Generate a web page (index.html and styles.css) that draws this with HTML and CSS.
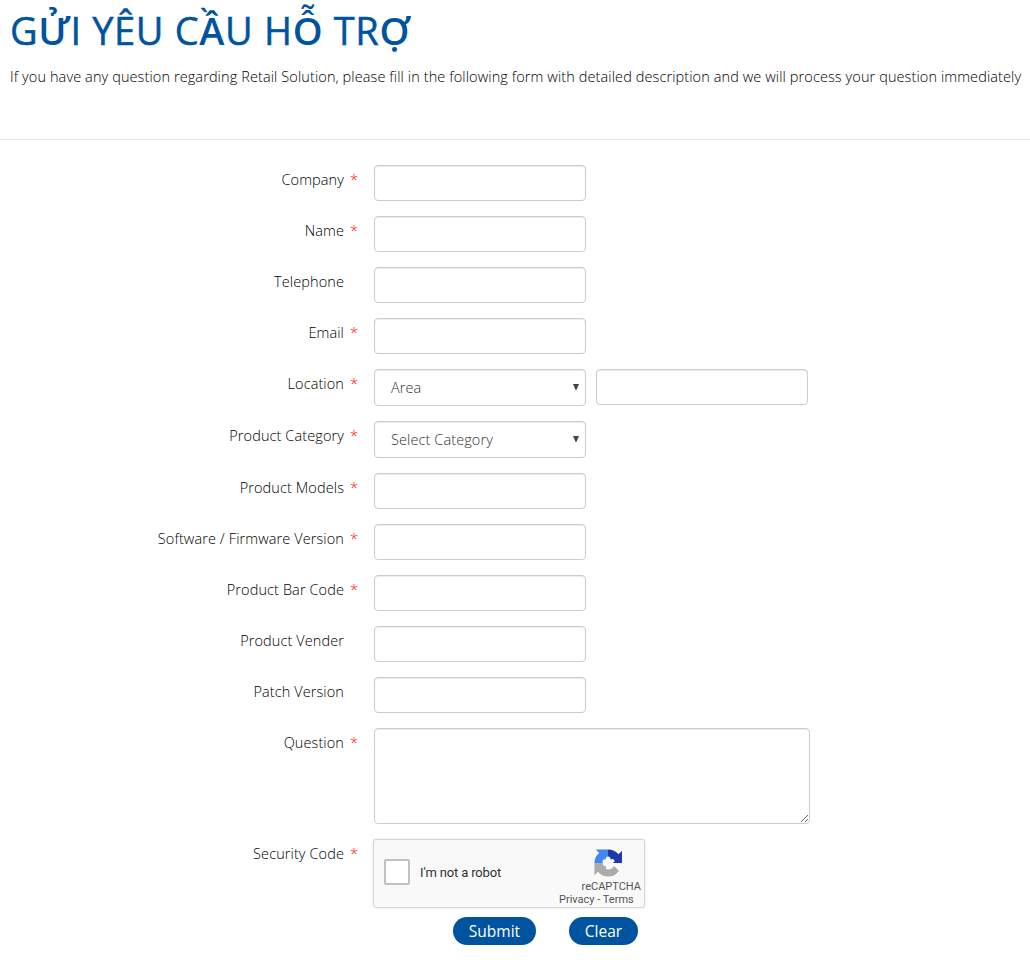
FILE: index.html
```html
<!doctype html>
<html lang="vi">
<head>
	<meta charset="utf-8">
	<title>Gửi yêu cầu hỗ trợ</title>
	<meta name="viewport" content="width=device-width, initial-scale=1">
	<link rel="stylesheet" href="styles.css">
</head>
<body>

	<header class="page-header">
		<h1>G<b>Ử</b>I YÊU C<b>Ầ</b>U H<b>Ỗ</b> TR<b>Ợ</b></h1>
		<p>If you have any question regarding Retail Solution, please fill in the following form with detailed description and we will process your question immediately</p>
	</header>

	<form class="support-form">
		<div class="row">
			<label for="company">Company</label><span class="required">*</span>
			<input id="company" class="control" type="text">
		</div>
		<div class="row">
			<label for="name">Name</label><span class="required">*</span>
			<input id="name" class="control" type="text">
		</div>
		<div class="row">
			<label for="telephone">Telephone</label><span class="required"></span>
			<input id="telephone" class="control" type="text">
		</div>
		<div class="row">
			<label for="email">Email</label><span class="required">*</span>
			<input id="email" class="control" type="text">
		</div>
		<div class="row">
			<label for="area">Location</label><span class="required">*</span>
			<div class="select">
				<select id="area" class="control">
					<option>Area</option>
				</select>
				<svg class="arrow" width="6" height="6" viewBox="0 0 6 6"><path d="M0 0h6L3.4 6h-.8z" fill="#444"/></svg>
			</div>
			<input class="control second" type="text" aria-label="Location">
		</div>
		<div class="row">
			<label for="category">Product Category</label><span class="required">*</span>
			<div class="select">
				<select id="category" class="control">
					<option>Select Category</option>
				</select>
				<svg class="arrow" width="6" height="6" viewBox="0 0 6 6"><path d="M0 0h6L3.4 6h-.8z" fill="#444"/></svg>
			</div>
		</div>
		<div class="row">
			<label for="models">Product Models</label><span class="required">*</span>
			<input id="models" class="control" type="text">
		</div>
		<div class="row">
			<label for="version">Software / Firmware Version</label><span class="required">*</span>
			<input id="version" class="control" type="text">
		</div>
		<div class="row">
			<label for="barcode">Product Bar Code</label><span class="required">*</span>
			<input id="barcode" class="control" type="text">
		</div>
		<div class="row">
			<label for="vender">Product Vender</label><span class="required"></span>
			<input id="vender" class="control" type="text">
		</div>
		<div class="row">
			<label for="patch">Patch Version</label><span class="required"></span>
			<input id="patch" class="control" type="text">
		</div>
		<div class="row">
			<label for="question">Question</label><span class="required">*</span>
			<textarea id="question" class="control"></textarea>
		</div>
		<div class="row">
			<label for="robot">Security Code</label><span class="required">*</span>
			<div class="captcha">
				<input id="robot" class="captcha-box" type="checkbox">
				<span class="captcha-text">I'm not a robot</span>
				<div class="captcha-brand">
					<svg class="captcha-logo" width="28" height="28" viewBox="0 0 64 64">
						<path d="M64 32V4l-8 8C50 5 42 1 32 1v16c4 0 6 3 6 7 5-3 9 0 9 5l-5 3z" fill="#1c3aa9"/>
						<path d="M32 1H4l8 8C5 14 1 22 1 32h19c-2-6 2-10 7-8 0-4 1-7 5-7z" fill="#4285f4"/>
						<path d="M1 32v28l8-8c5 7 13 11 23 11 11 0 19-5 25-13L46 39c-3 5-8 8-13 8-6 0-7-4-5-8-5 1-8-2-8-7z" fill="#ababab"/>
					</svg>
					<span class="captcha-name">reCAPTCHA</span>
					<span class="captcha-links">Privacy - Terms</span>
				</div>
			</div>
		</div>
		<div class="buttons">
			<button type="submit">Submit</button>
			<button type="reset">Clear</button>
		</div>
	</form>

</body>
</html>
```

FILE: styles.css
```css
* {
	box-sizing: border-box;
}
body {
	margin: 0;
	background-color: #fff;
	font-family: "Open Sans", "Noto Sans", sans-serif;
	font-size: 14.5px;
	font-weight: 300;
	line-height: 20px;
	letter-spacing: 0.1px;
	color: #000;
}
.page-header {
	height: 140px;
	padding: 4px 0 0 10px;
	border-bottom: 1px solid #e5e5e5;
}
h1 {
	margin: 0 0 10px;
	font-size: 38px;
	font-weight: 400;
	line-height: 53px;
	letter-spacing: 0.65px;
	color: #00539f;
	white-space: nowrap;
	-webkit-text-stroke: 0.5px #00539f;
}
h1 b {
	font-weight: 600;
	-webkit-text-stroke: 0;
}
p {
	margin: 0;
	white-space: nowrap;
}
.support-form {
	padding-top: 25px;
}
.row {
	display: flex;
	align-items: flex-start;
	margin-bottom: 15px;
}
label {
	width: 344px;
	padding-top: 5px;
	text-align: right;
	white-space: nowrap;
}
.required {
	width: 30px;
	padding: 5px 0 0 6px;
	color: #f00;
}
.control {
	display: block;
	width: 212px;
	height: 36px;
	margin: 0;
	padding: 6px 16px;
	border: 1px solid #ccc;
	border-radius: 4px;
	background-color: #fff;
	box-shadow: inset 0 1px 1px rgba(0, 0, 0, 0.075);
	font: inherit;
	letter-spacing: inherit;
	color: #333;
}
.select {
	position: relative;
}
select.control {
	height: 37px;
	appearance: none;
}
.arrow {
	position: absolute;
	top: 15px;
	right: 7px;
}
.second {
	margin-left: 10px;
}
textarea.control {
	width: 436px;
	height: 96px;
}
.captcha {
	display: flex;
	width: 272px;
	height: 69px;
	margin-left: -1px;
	padding-left: 12px;
	border: 1px solid #d6d6d6;
	border-radius: 3px;
	background-color: #f9f9f9;
	box-shadow: 0 0 3px rgba(0, 0, 0, 0.1);
	font-family: Roboto, sans-serif;
	font-weight: 400;
	letter-spacing: 0;
}
.captcha-box {
	appearance: none;
	width: 26px;
	height: 26px;
	margin: 19px 10px 0 -2px;
	border: 2px solid #c1c1c1;
	border-radius: 2px;
	background-color: #fff;
}
.captcha-text {
	padding-top: 23px;
	font-size: 13px;
	letter-spacing: -0.15px;
	color: #333;
}
.captcha-brand {
	display: flex;
	flex-direction: column;
	width: 82px;
	margin: 9px 3px 0 auto;
	color: #555;
	line-height: 12px;
}
.captcha-logo {
	margin-left: 35px;
}
.captcha-name {
	margin-top: 4px;
	font-size: 11px;
	text-align: right;
}
.captcha-links {
	margin-top: 1px;
	font-size: 11px;
}
.buttons {
	display: flex;
	gap: 33px;
	margin-top: -6px;
	padding-left: 453px;
}
button {
	width: 83px;
	height: 28px;
	padding: 0;
	border: 0;
	border-radius: 14px;
	background-color: #00539f;
	font: inherit;
	font-size: 15.5px;
	font-weight: 400;
	color: #fff;
}
button[type="reset"] {
	width: 69px;
}
```
